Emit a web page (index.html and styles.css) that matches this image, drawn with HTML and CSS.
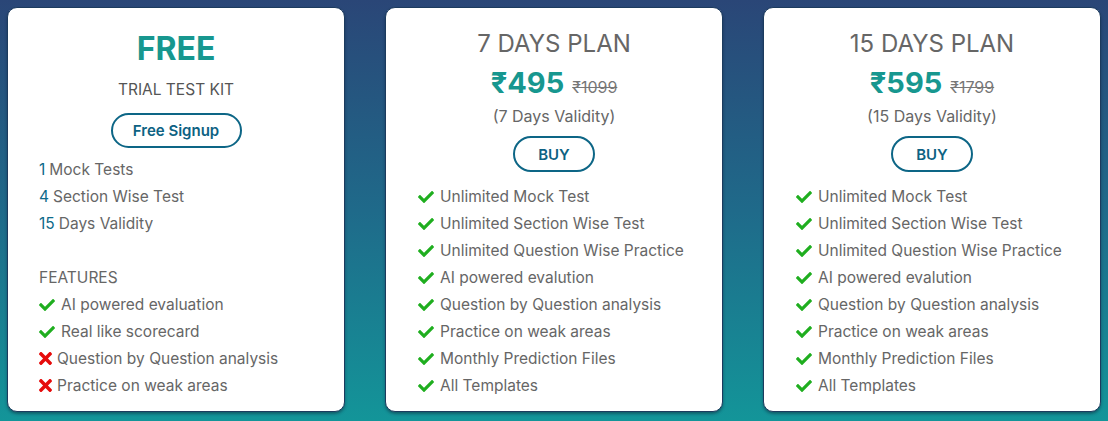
FILE: index.html
```html
<!DOCTYPE html>
<html lang="en">
<head>
<meta charset="utf-8">
<title>Plans</title>
<link rel="stylesheet" href="styles.css">
</head>
<body>
<svg width="0" height="0" class="defs">
  <defs>
    <symbol id="chk" viewBox="0 0 512 370">
      <path d="M173.898 369.404l-166.4-166.4c-9.997-9.997-9.997-26.206 0-36.204l36.203-36.204c9.997-9.998 26.207-9.998 36.204 0L192 242.69 432.095 2.596c9.997-9.997 26.207-9.997 36.204 0l36.203 36.204c9.997 9.997 9.997 26.206 0 36.204l-294.4 294.401c-9.998 9.997-26.207 9.997-36.204-.001z"/>
    </symbol>
    <symbol id="cross" viewBox="0 80 352 352">
      <path d="M242.72 256l100.07-100.07c12.28-12.28 12.28-32.190 0-44.48l-22.24-22.24c-12.28-12.28-32.19-12.28-44.48 0L176 189.28 75.93 89.21c-12.28-12.28-32.19-12.28-44.48 0L9.21 111.45c-12.28 12.28-12.28 32.19 0 44.48L109.28 256 9.21 356.07c-12.28 12.28-12.28 32.19 0 44.48l22.24 22.24c12.28 12.28 32.2 12.28 44.48 0L176 322.72l100.07 100.07c12.28 12.28 32.2 12.28 44.48 0l22.24-22.24c12.28-12.28 12.28-32.19 0-44.48L242.72 256z"/>
    </symbol>
  </defs>
</svg>
<main class="plans">
  <section class="card">
    <h2 class="free">FREE</h2>
    <p class="kit">TRIAL TEST KIT</p>
    <a class="btn btn-signup">Free Signup</a>
    <ul class="counts">
      <li><span class="num">1</span> Mock Tests</li>
      <li><span class="num">4</span> Section Wise Test</li>
      <li><span class="num">15</span> Days Validity</li>
    </ul>
    <p class="features-title">FEATURES</p>
    <ul class="feat">
      <li><svg class="ic ok"><use href="#chk"/></svg>AI powered evaluation</li>
      <li><svg class="ic ok"><use href="#chk"/></svg>Real like scorecard</li>
      <li class="no"><svg class="ic x"><use href="#cross"/></svg>Question by Question analysis</li>
      <li class="no"><svg class="ic x"><use href="#cross"/></svg>Practice on weak areas</li>
    </ul>
  </section>

  <section class="card">
    <h2 class="plan">7 DAYS PLAN</h2>
    <p class="price"><span class="now">₹495</span><s class="was">₹1099</s></p>
    <p class="validity">(7 Days Validity)</p>
    <a class="btn btn-buy">BUY</a>
    <ul class="feat paid">
      <li><svg class="ic ok"><use href="#chk"/></svg>Unlimited Mock Test</li>
      <li><svg class="ic ok"><use href="#chk"/></svg>Unlimited Section Wise Test</li>
      <li><svg class="ic ok"><use href="#chk"/></svg>Unlimited Question Wise Practice</li>
      <li><svg class="ic ok"><use href="#chk"/></svg>AI powered evalution</li>
      <li><svg class="ic ok"><use href="#chk"/></svg>Question by Question analysis</li>
      <li><svg class="ic ok"><use href="#chk"/></svg>Practice on weak areas</li>
      <li><svg class="ic ok"><use href="#chk"/></svg>Monthly Prediction Files</li>
      <li><svg class="ic ok"><use href="#chk"/></svg>All Templates</li>
    </ul>
  </section>

  <section class="card">
    <h2 class="plan">15 DAYS PLAN</h2>
    <p class="price"><span class="now">₹595</span><s class="was">₹1799</s></p>
    <p class="validity">(15 Days Validity)</p>
    <a class="btn btn-buy">BUY</a>
    <ul class="feat paid">
      <li><svg class="ic ok"><use href="#chk"/></svg>Unlimited Mock Test</li>
      <li><svg class="ic ok"><use href="#chk"/></svg>Unlimited Section Wise Test</li>
      <li><svg class="ic ok"><use href="#chk"/></svg>Unlimited Question Wise Practice</li>
      <li><svg class="ic ok"><use href="#chk"/></svg>AI powered evalution</li>
      <li><svg class="ic ok"><use href="#chk"/></svg>Question by Question analysis</li>
      <li><svg class="ic ok"><use href="#chk"/></svg>Practice on weak areas</li>
      <li><svg class="ic ok"><use href="#chk"/></svg>Monthly Prediction Files</li>
      <li><svg class="ic ok"><use href="#chk"/></svg>All Templates</li>
    </ul>
  </section>
</main>
</body>
</html>
```

FILE: styles.css
```css
* { box-sizing: border-box; }
html, body { margin: 0; height: 100%; }
body {
  background: linear-gradient(180deg, #2a4677 0%, #1f6a8a 50%, #139599 100%);
  font-family: Inter, "Noto Sans", "DejaVu Sans", sans-serif;
  color: #666;
  padding: 7px;
  overflow: hidden;
}
.defs { position: absolute; }
.plans {
  display: grid;
  grid-template-columns: repeat(3, 338px);
  column-gap: 40px;
  height: 403px;
}
.card {
  background: #fff;
  border-radius: 10px;
  border: 1px solid #1c3b5e;
  box-shadow: 0 2px 3px rgba(10, 30, 50, 0.45);
  padding: 20px 31px 12px;
  display: flex;
  flex-direction: column;
  align-items: center;
}
h2, p, ul { margin: 0; padding: 0; }
ul { list-style: none; align-self: stretch; }

.free {
  font-size: 32px;
  line-height: 38px;
  font-weight: 700;
  color: #17978f;
  margin-top: 2px;
}
.kit {
  font-size: 15.5px;
  line-height: 20px;
  color: #555;
  margin-top: 12px;
}
.btn {
  display: flex;
  align-items: center;
  justify-content: center;
  border: 2px solid #0d6686;
  border-radius: 20px;
  color: #0d6283;
  font-weight: 600;
  font-size: 15px;
}
.btn-signup {
  width: 131px;
  height: 35px;
  margin-top: 13px;
}
.counts { margin-top: 8px; }
.counts li, .feat li {
  font-size: 15.5px;
  line-height: 27px;
  height: 27px;
  color: #666;
  display: flex;
  align-items: center;
  white-space: nowrap;
}
.num { color: #0d6a8a; margin-right: 4px; }
.features-title {
  align-self: stretch;
  font-size: 15.5px;
  line-height: 27px;
  color: #666;
  margin-top: 27px;
}
.ic {
  fill: currentColor;
  flex: none;
}
.ic.ok {
  width: 16px;
  height: 12px;
  color: #1fae1f;
  margin-right: 6px;
}
.ic.x {
  width: 13px;
  height: 13px;
  color: #e60b0b;
  margin-right: 5px;
}
.plan {
  font-size: 24px;
  line-height: 30px;
  font-weight: 400;
  color: #666;
  margin-top: 1px;
}
.price {
  margin-top: 6px;
  height: 36px;
  line-height: 36px;
  display: flex;
  align-items: baseline;
  gap: 8px;
  overflow: visible;
}
.now {
  font-size: 29px;
  line-height: 36px;
  font-weight: 700;
  color: #17978f;
}
.was {
  font-size: 16px;
  line-height: 36px;
  color: #777;
}
.validity {
  font-size: 16px;
  line-height: 22px;
  margin-top: 4px;
  color: #666;
}
.btn-buy {
  width: 82px;
  height: 36px;
  margin-top: 9px;
}
.paid { margin-top: 11px; padding-left: 1px; }
```
